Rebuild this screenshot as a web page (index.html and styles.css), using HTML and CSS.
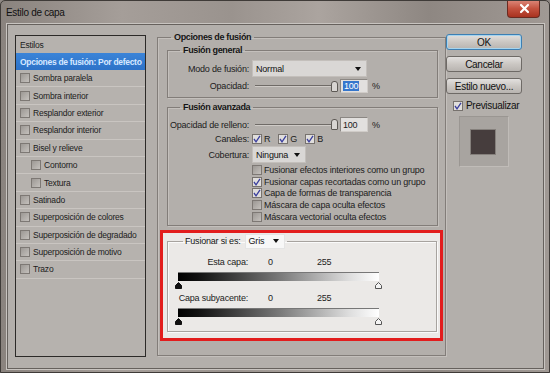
FILE: index.html
```html
<!doctype html>
<html lang="es">
<head>
<meta charset="utf-8">
<title>Estilo de capa</title>
<link rel="stylesheet" href="styles.css">
</head>
<body>
<div class="window">
  <div class="titlebar">
    <span class="wintitle">Estilo de capa</span>
    <span class="close">
      <svg width="33" height="17" viewBox="0 0 33 17"><path d="M13 5 L20 12 M20 5 L13 12" stroke="#fff" stroke-width="2.2" stroke-linecap="round"/></svg>
    </span>
  </div>

  <div class="client">
    <!-- lista de estilos -->
    <div class="stylelist">
      <div class="row head">Estilos</div>
      <div class="row sel">Opciones de fusión: Por defecto</div>
      <div class="row"><span class="cb"></span>Sombra paralela</div>
      <div class="row"><span class="cb"></span>Sombra interior</div>
      <div class="row"><span class="cb"></span>Resplandor exterior</div>
      <div class="row"><span class="cb"></span>Resplandor interior</div>
      <div class="row"><span class="cb"></span>Bisel y relieve</div>
      <div class="row sub"><span class="cb"></span>Contorno</div>
      <div class="row sub"><span class="cb"></span>Textura</div>
      <div class="row"><span class="cb"></span>Satinado</div>
      <div class="row"><span class="cb"></span>Superposición de colores</div>
      <div class="row"><span class="cb"></span>Superposición de degradado</div>
      <div class="row"><span class="cb"></span>Superposición de motivo</div>
      <div class="row"><span class="cb"></span>Trazo</div>
    </div>

    <!-- opciones -->
    <fieldset class="group main">
      <legend>Opciones de fusión</legend>

      <fieldset class="group gen">
        <legend>Fusión general</legend>
        <div class="field tall">
          <label>Modo de fusión:</label>
          <span class="select wide">Normal<i class="arrow"></i></span>
        </div>
        <div class="field op">
          <label>Opacidad:</label>
          <span class="slider"><span class="track"></span><span class="knob"></span></span>
          <span class="num"><b class="hl">100</b></span>
          <span class="pct">%</span>
        </div>
      </fieldset>

      <fieldset class="group adv">
        <legend>Fusión avanzada</legend>
        <div class="field fill">
          <label>Opacidad de relleno:</label>
          <span class="slider"><span class="track"></span><span class="knob"></span></span>
          <span class="num">100</span>
          <span class="pct">%</span>
        </div>
        <div class="field chan">
          <label>Canales:</label>
          <span class="ch"><span class="cb on"><svg width="8" height="8" viewBox="0 0 8 8"><path d="M1 4 L3 6.8 L7 0.8" fill="none" stroke="#3b3f9e" stroke-width="1.3"/></svg></span>R</span>
          <span class="ch"><span class="cb on"><svg width="8" height="8" viewBox="0 0 8 8"><path d="M1 4 L3 6.8 L7 0.8" fill="none" stroke="#3b3f9e" stroke-width="1.3"/></svg></span>G</span>
          <span class="ch"><span class="cb on"><svg width="8" height="8" viewBox="0 0 8 8"><path d="M1 4 L3 6.8 L7 0.8" fill="none" stroke="#3b3f9e" stroke-width="1.3"/></svg></span>B</span>
        </div>
        <div class="field tall">
          <label>Cobertura:</label>
          <span class="select short">Ninguna<i class="arrow"></i></span>
        </div>
        <div class="checks">
          <div class="chk"><span class="cb"></span>Fusionar efectos interiores como un grupo</div>
          <div class="chk"><span class="cb on"><svg width="8" height="8" viewBox="0 0 8 8"><path d="M1 4 L3 6.8 L7 0.8" fill="none" stroke="#3b3f9e" stroke-width="1.3"/></svg></span>Fusionar capas recortadas como un grupo</div>
          <div class="chk"><span class="cb on"><svg width="8" height="8" viewBox="0 0 8 8"><path d="M1 4 L3 6.8 L7 0.8" fill="none" stroke="#3b3f9e" stroke-width="1.3"/></svg></span>Capa de formas de transparencia</div>
          <div class="chk"><span class="cb"></span>Máscara de capa oculta efectos</div>
          <div class="chk"><span class="cb"></span>Máscara vectorial oculta efectos</div>
        </div>
      </fieldset>

      <div class="highlight">
        <fieldset class="group blend">
          <legend><span>Fusionar si es:</span><span class="select gris">Gris<i class="arrow"></i></span></legend>
          <div class="lvl first"><label>Esta capa:</label><span class="v0">0</span><span>255</span></div>
          <div class="grad"></div>
          <div class="marks">
            <svg width="7" height="7" viewBox="0 0 7 7"><path d="M3.5 0.5 L6.5 3.5 L6.5 6.5 L0.5 6.5 L0.5 3.5 Z" fill="#111" stroke="#111"/></svg>
            <svg width="7" height="7" viewBox="0 0 7 7"><path d="M3.5 0.5 L6.5 3.5 L6.5 6.5 L0.5 6.5 L0.5 3.5 Z" fill="#f4f4f4" stroke="#555"/></svg>
          </div>
          <div class="lvl"><label>Capa subyacente:</label><span class="v0">0</span><span>255</span></div>
          <div class="grad"></div>
          <div class="marks">
            <svg width="7" height="7" viewBox="0 0 7 7"><path d="M3.5 0.5 L6.5 3.5 L6.5 6.5 L0.5 6.5 L0.5 3.5 Z" fill="#111" stroke="#111"/></svg>
            <svg width="7" height="7" viewBox="0 0 7 7"><path d="M3.5 0.5 L6.5 3.5 L6.5 6.5 L0.5 6.5 L0.5 3.5 Z" fill="#f4f4f4" stroke="#555"/></svg>
          </div>
        </fieldset>
      </div>
    </fieldset>

    <!-- botones -->
    <div class="side">
      <div class="btn default">OK</div>
      <div class="btn">Cancelar</div>
      <div class="btn">Estilo nuevo...</div>
      <div class="preview-opt"><span class="cb on"><svg width="8" height="8" viewBox="0 0 8 8"><path d="M1 4 L3 6.8 L7 0.8" fill="none" stroke="#3b3f9e" stroke-width="1.3"/></svg></span>Previsualizar</div>
      <div class="preview"><div class="swatch"></div></div>
    </div>
  </div>
</div>
</body>
</html>
```

FILE: styles.css
```css
* {
  box-sizing: border-box;
}
body {
  margin: 0;
  font-family: "Liberation Sans", Arial, sans-serif;
  font-size: 9px;
  letter-spacing: -0.2px;
  color: #1c1c1c;
  background: #8f8884;
}
.window {
  width: 550px;
  height: 373px;
  display: flex;
  flex-direction: column;
  border: 1px solid #3f3b38;
  border-radius: 5px 5px 0 0;
  background: linear-gradient(to right, #8a837e, #a59e99 22%, #9a938e 42%, #aba49f 58%, #8e8782 78%, #a09994);
  overflow: hidden;
}
.titlebar {
  height: 23px;
  display: flex;
  align-items: center;
  padding-left: 5px;
}
.wintitle {
  font-size: 10px;
  letter-spacing: -0.3px;
  color: #111;
}
.close {
  margin-left: auto;
  margin-right: 9px;
  align-self: flex-start;
  margin-top: -1px;
  width: 33px;
  height: 18px;
  border: 1px solid #6a2a20;
  border-top: none;
  border-radius: 0 0 4px 4px;
  background: linear-gradient(#dd8a7c, #c4523f 50%, #a8321f);
}
.close svg {
  display: block;
}

.client {
  flex: 1;
  margin: 0 5px 3px 6px;
  border: 1px solid #66615d;
  box-shadow: 0 0 0 1px #c8c4c0;
  background: #b3afab;
  display: flex;
  align-items: flex-start;
  padding: 6px 8px 0 7px;
}

/* lista */
.stylelist {
  width: 131px;
  height: 322px;
  margin-top: 4px;
  margin-right: 11px;
  border: 1px solid #2c2a28;
  background: #b6b2ae;
  font-size: 8.5px;
}
.stylelist .row {
  height: 17.4px;
  display: flex;
  align-items: center;
  padding-left: 4px;
  border-bottom: 1px solid #c9c5c1;
  white-space: nowrap;
  overflow: hidden;
}
.stylelist .head {
  height: 17px;
  border-bottom: none;
}
.stylelist .sel {
  height: 17px;
  background: linear-gradient(#3b84d8, #2d72c8);
  color: #d7e8ff;
  font-weight: bold;
  letter-spacing: -0.3px;
  border-bottom: none;
}
.stylelist .sub {
  padding-left: 15px;
}
.stylelist .cb {
  margin-right: 3px;
}

.cb {
  display: inline-flex;
  align-items: center;
  justify-content: center;
  width: 10px;
  height: 10px;
  flex: none;
  border: 1px solid #7d7874;
  background: linear-gradient(135deg, #9c9894, #c4c0bc);
}
.cb.on {
  background: #e0dedc;
  border-color: #77726e;
}
.cb svg {
  display: block;
}

/* grupos */
fieldset.group {
  margin: 0;
  padding: 0;
  min-width: 0;
  border: 1px solid #827d79;
  box-shadow: inset 1px 1px 0 #c4c0bc, 1px 1px 0 #c4c0bc;
}
fieldset.group legend {
  margin-left: 12px;
  padding: 0 3px;
  line-height: 12px;
  font-weight: bold;
  letter-spacing: -0.35px;
  color: #151515;
}
.main {
  width: 289px;
  margin-right: 13px;
}
fieldset.main {
  padding: 1px 0 14px 0;
}
fieldset.main > legend {
  margin-left: 13px;
}
fieldset.gen {
  margin: 0 7px 0 9px;
  padding: 4px 0 4px 0;
}
fieldset.adv {
  margin: 3px 7px 0 9px;
  padding: 4px 0 2px 0;
}

.field {
  display: flex;
  align-items: center;
}
.field label {
  width: 81px;
  flex: none;
  margin-right: 3px;
  display: flex;
  justify-content: flex-end;
  white-space: nowrap;
}
.field.tall {
  height: 17px;
}
.field.op {
  height: 14px;
  margin-top: 2px;
}
.field.fill {
  height: 15px;
}
.field.chan {
  height: 12px;
  margin-top: 1px;
}
.adv .field.tall {
  margin-top: 1px;
}

.select {
  display: flex;
  align-items: center;
  height: 17px;
  padding-left: 3px;
  background: #d9d7d5;
  border: 1px solid #c3bfbb;
  color: #111;
}
.select.wide {
  width: 115px;
}
.select.short {
  width: 54px;
}
.arrow {
  margin-left: auto;
  margin-right: 5px;
  width: 0;
  height: 0;
  border-left: 3.5px solid transparent;
  border-right: 3.5px solid transparent;
  border-top: 4px solid #111;
}

.slider {
  width: 86px;
  height: 11px;
  display: flex;
  align-items: center;
  padding-left: 3px;
}
.track {
  flex: 1;
  height: 2px;
  border-top: 1px solid #6f6b67;
  border-bottom: 1px solid #cfcbc7;
}
.knob {
  width: 7px;
  height: 11px;
  margin-left: -2px;
  border: 1px solid #5d5955;
  border-radius: 3px 3px 1px 1px;
  background: #d8d5d2;
}
.num {
  width: 28px;
  height: 100%;
  margin-left: 2px;
  display: flex;
  align-items: center;
  padding-left: 2px;
  background: #e2e0de;
  border: 1px solid;
  border-color: #8b8783 #d0ccc8 #d0ccc8 #8b8783;
}
.hl {
  font-weight: normal;
  background: #3576cc;
  color: #fff;
  padding: 0 1px;
}
.pct {
  margin-left: 4px;
}

.ch {
  display: inline-flex;
  align-items: center;
  margin-right: 8px;
}
.ch .cb {
  margin-right: 2px;
}

.checks {
  margin-top: 1px;
  padding-left: 84px;
}
.chk {
  height: 11.8px;
  display: flex;
  align-items: center;
  white-space: nowrap;
}
.chk .cb {
  margin-right: 2px;
}

/* zona marcada */
.highlight {
  margin: 4px 2px 0 2px;
  border: 3px solid #e21d1d;
  background: #ebe9e7;
  padding: 1px 3px 6px 4px;
}
fieldset.blend {
  padding: 7px 0 6px 10px;
  border-color: #a7a39f;
  box-shadow: inset 1px 1px 0 #fafafa, 1px 1px 0 #fafafa;
}
fieldset.blend legend {
  margin-left: 5px;
  padding: 0 2px;
  font-weight: normal;
  letter-spacing: -0.2px;
  display: flex;
  align-items: center;
  height: 15px;
}
.select.gris {
  width: 40px;
  height: 15px;
  margin-left: 4px;
  background: #f7f7f7;
  border-color: #e4e4e4;
}
.lvl {
  display: flex;
  align-items: center;
  height: 12px;
  margin-top: 3px;
  white-space: nowrap;
}
.lvl.first {
  margin-top: 0;
}
.lvl label {
  width: 70px;
  flex: none;
  display: flex;
  justify-content: flex-end;
}
.v0 {
  margin-left: 20px;
  width: 49px;
}
.grad {
  width: 201px;
  height: 9px;
  margin-top: 4px;
  border-top: 1px solid #777;
  background: linear-gradient(to right, #000 0%, #111 10%, #777 50%, #ddd 85%, #fff 100%);
}
.marks {
  width: 207px;
  height: 7px;
  margin-top: 1px;
  margin-left: -3px;
  display: flex;
  justify-content: space-between;
}
.marks svg {
  display: block;
}

/* botones */
.side {
  width: 76px;
  margin-top: 3px;
  display: flex;
  flex-direction: column;
}
.btn {
  height: 16px;
  margin-bottom: 6px;
  display: flex;
  align-items: center;
  justify-content: center;
  font-size: 10px;
  letter-spacing: -0.3px;
  color: #111;
  border: 1px solid #6e6a66;
  border-radius: 3px;
  background: linear-gradient(#e2e0de, #cbc7c3 50%, #b8b4b0);
}
.btn.default {
  border-color: #3d7fb3;
  box-shadow: inset 0 0 0 1px #a6d4ee;
}
.preview-opt {
  display: flex;
  align-items: center;
  height: 11px;
  margin-left: 7px;
  font-size: 10px;
  letter-spacing: -0.3px;
  color: #111;
}
.preview-opt .cb {
  margin-right: 3px;
}
.preview {
  width: 50px;
  height: 51px;
  margin: 5px auto 0;
  padding: 12px 0 0 10px;
  background: #a8a4a0;
  border: 1px solid;
  border-color: #9a9692 #c0bcb8 #c0bcb8 #9a9692;
}
.swatch {
  width: 26px;
  height: 26px;
  background: #463d3d;
  border: 1px solid #85807c;
}
```
